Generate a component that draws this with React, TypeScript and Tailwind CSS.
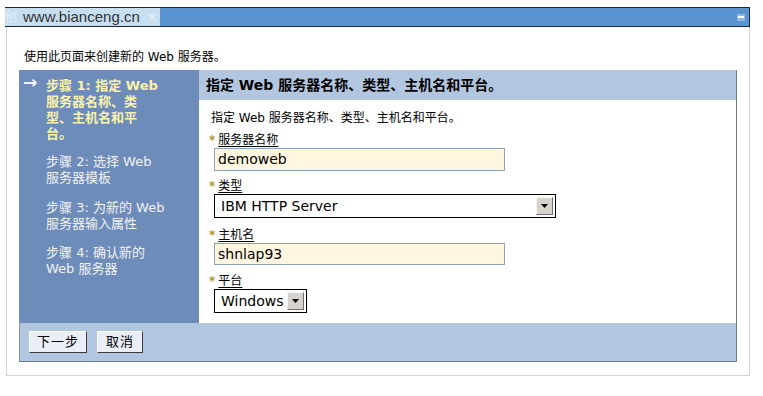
import React from "react";

const F = "font-['DejaVu_Sans','Noto_Sans_CJK_SC',sans-serif]";

function DropBtn() {
  return (
    <div className="w-[17px] h-[18px] bg-[#d6d3cc] border border-t-[#f4f4f4] border-l-[#f4f4f4] border-r-[#6e6e6e] border-b-[#6e6e6e] flex items-center justify-center">
      <svg width="7" height="4" viewBox="0 0 7 4">
        <path d="M0 0 H7 L3.5 4 Z" fill="#000" />
      </svg>
    </div>
  );
}

function Label({ text }: { text: string }) {
  return (
    <div className="flex items-end h-[15px] leading-[15px] text-[12px] text-black">
      <span className="text-[#b0962a] text-[12px] font-bold mr-[3px] ml-[-2px]">*</span>
      <span className="underline underline-offset-2">{text}</span>
    </div>
  );
}

export default function App() {
  return (
    <div className={`w-[763px] h-[396px] bg-white ${F} overflow-hidden`}>
      {/* title bar */}
      <div className="pt-[7px] pl-[5px]">
        <div className="w-[745px] h-[20px] bg-[#5a93d2] border-t border-b border-r border-[#1c2a3c] flex items-center">
          <div className="w-[155px] h-full bg-[#c7dff0] flex items-center relative">
            <span className="absolute left-[0px] text-[12px] text-[#e2eef8]">创</span>
            <span className="ml-[18px] text-[15px] leading-[18px] text-[#333] font-['Liberation_Sans',sans-serif]">
              www.bianceng.cn
            </span>
            <span className="absolute right-[2px] text-[13px] text-[#e8f2fa]">×</span>
          </div>
          <div className="flex-1" />
          <div className="w-[8px] h-[7px] bg-[#8fb6e0] mr-[4px] flex items-center justify-center">
            <div className="w-[6px] h-[2px] bg-white" />
          </div>
        </div>
      </div>
      {/* panel */}
      <div className="ml-[6px] w-[744px] h-[349px] border-l border-r border-b border-[#d2d2d2]">
        <div className="pl-[17px] pt-[22px] h-[43px] text-[12px] leading-[16px] text-black">
          使用此页面来创建新的 Web 服务器。
        </div>
        {/* wizard */}
        <div className="ml-[12px] w-[718px] border-r border-b border-[#6a7a8e]">
          <div className="flex h-[253px]">
            {/* nav */}
            <div className="w-[180px] bg-[#6e8cba] pt-[8px] text-[13px] leading-[16px] text-[#f2f2f2] relative">
              <span className="absolute left-[4px] top-[4px] text-[17px] font-bold text-[#f4f4f4]">→</span>
              <div className="pl-[27px] font-bold text-[#faf2ac] mb-[12px]">
                <div>步骤 1: 指定 Web</div>
                <div>服务器名称、类</div>
                <div>型、主机名和平</div>
                <div>台。</div>
              </div>
              <div className="pl-[27px] mb-[14px]">
                <div>步骤 2: 选择 Web</div>
                <div>服务器模板</div>
              </div>
              <div className="pl-[27px] mb-[13px]">
                <div>步骤 3: 为新的 Web</div>
                <div>服务器输入属性</div>
              </div>
              <div className="pl-[27px]">
                <div>步骤 4: 确认新的</div>
                <div>Web 服务器</div>
              </div>
            </div>
            {/* content */}
            <div className="flex-1 bg-white">
              <div className="h-[30px] bg-[#b3c6df] flex items-center pl-[7px] text-[14px] font-bold text-black">
                指定 Web 服务器名称、类型、主机名和平台。
              </div>
              <div className="pl-[12px] pt-[10px]">
                <div className="text-[12px] leading-[16px] text-black">
                  指定 Web 服务器名称、类型、主机名和平台。
                </div>
                <div className="mt-[7px]">
                  <Label text="服务器名称" />
                </div>
                <div className="ml-[3px] w-[291px] h-[23px] bg-[#fff6df] border border-[#8aa2bc] flex items-center pl-[3px] text-[14px] text-black">
                  demoweb
                </div>
                <div className="mt-[8px]">
                  <Label text="类型" />
                </div>
                <div className="ml-[3px] w-[342px] h-[24px] bg-white border border-black flex items-center justify-between pl-[6px] pr-[2px] text-[14px] text-black">
                  <span>IBM HTTP Server</span>
                  <DropBtn />
                </div>
                <div className="mt-[10px]">
                  <Label text="主机名" />
                </div>
                <div className="ml-[3px] w-[291px] h-[22px] bg-[#fff6df] border border-[#8aa2bc] flex items-center pl-[3px] text-[14px] text-black">
                  shnlap93
                </div>
                <div className="mt-[9px]">
                  <Label text="平台" />
                </div>
                <div className="ml-[3px] w-[93px] h-[24px] bg-white border border-black flex items-center justify-between pl-[6px] pr-[2px] text-[14px] text-black">
                  <span>Windows</span>
                  <DropBtn />
                </div>
              </div>
            </div>
          </div>
          {/* footer */}
          <div className="h-[38px] bg-[#b3c6df] border-l border-[#7f93ad] flex items-center pl-[9px] gap-[10px]">
            <button className="w-[58px] h-[22px] bg-[#e9eef7] border border-t-white border-l-white border-r-[#3c3c3c] border-b-[#3c3c3c] text-[13px] tracking-[1px] text-black flex items-center justify-center">
              下一步
            </button>
            <button className="w-[46px] h-[22px] bg-[#e9eef7] border border-t-white border-l-white border-r-[#3c3c3c] border-b-[#3c3c3c] text-[13px] tracking-[1px] text-black flex items-center justify-center">
              取消
            </button>
          </div>
        </div>
      </div>
    </div>
  );
}
